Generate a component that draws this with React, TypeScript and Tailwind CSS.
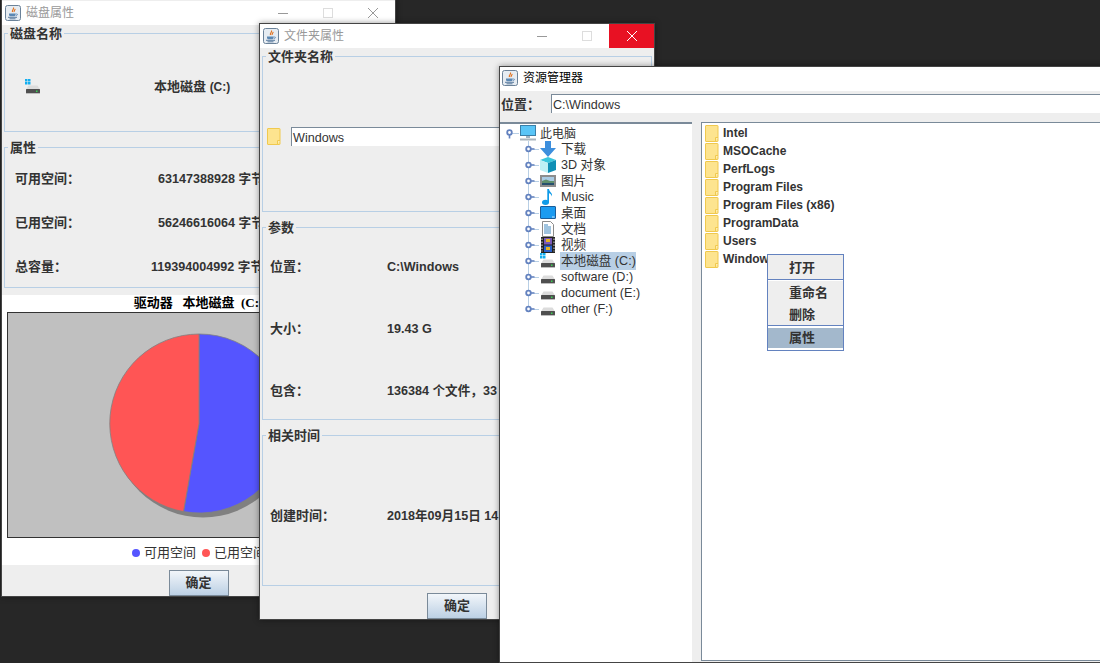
import type { ReactNode } from 'react'

function JavaIcon() {
  return (
    <svg width="16" height="16" viewBox="0 0 16 16" className="shrink-0">
      <rect x="0.5" y="0.5" width="15" height="15" rx="2" fill="#e6ecf2" stroke="#6b8299" />
      <path d="M8.5 2.5c1 1.5-2 2.5-1 4.500M10 4c.5 1-1.500 1.500-.8 3" fill="none" stroke="#e2711d" strokeWidth="1.200" />
      <path d="M4 8.500h6.500v1.200c0 1-1 1.500-2 1.500h-2.500c-1 0-2-.5-2-1.500z" fill="#5b87b2" />
      <path d="M3 12.300h9M4.500 13.800h6" stroke="#4a6d94" strokeWidth="0.900" />
      <path d="M10.500 9h1.500c.8 0 .8 1.500-1.200 1.700" fill="none" stroke="#5b87b2" strokeWidth="0.800" />
    </svg>
  )
}

function FolderIcon() {
  return (
    <svg width="14" height="17" viewBox="0 0 14 17" className="shrink-0">
      <rect x="0.500" y="0.500" width="12.500" height="16" rx="0.500" fill="#fde48f" stroke="#f0c94e" />
      <path d="M10.500 16.500v-4h2.500" fill="#fdeeb5" stroke="#f0c94e" />
    </svg>
  )
}

function DriveIcon({ windows }: { windows?: boolean }) {
  return (
    <svg width="16" height="16" viewBox="0 0 16 16" className="shrink-0">
      {windows && (
        <g fill="#12aef0">
          <rect x="0" y="0" width="2.500" height="2.500" />
          <rect x="3" y="0" width="2.500" height="2.500" />
          <rect x="0" y="3" width="2.500" height="2.500" />
          <rect x="3" y="3" width="2.500" height="2.500" />
        </g>
      )}
      <path d="M3.500 6.500h9l2.500 4h-14z" fill="#dcdcdc" />
      <rect x="1" y="10" width="14" height="4" rx="0.500" fill="#4f4f4f" />
      <rect x="1" y="14" width="14" height="1" fill="#bdbdbd" />
      <rect x="11" y="11.500" width="1.500" height="1.500" fill="#39d353" />
    </svg>
  )
}

function TreeIcon({ name }: { name: string }) {
  if (name === 'pc')
    return (
      <svg width="16" height="16" viewBox="0 0 16 16" className="shrink-0">
        <rect x="0.500" y="0.500" width="15" height="10" fill="#59c5f7" stroke="#3b7fa8" />
        <rect x="6" y="11" width="4" height="2" fill="#9fb4c2" />
        <rect x="0" y="13.500" width="16" height="2" fill="#aab5bd" />
      </svg>
    )
  if (name === 'down')
    return (
      <svg width="16" height="16" viewBox="0 0 16 16" className="shrink-0">
        <path d="M5 0h6v7h5l-8 9-8-9h5z" fill="#3d8fdd" />
      </svg>
    )
  if (name === 'cube')
    return (
      <svg width="16" height="16" viewBox="0 0 16 16" className="shrink-0">
        <path d="M8 0l8 3-8 3-8-3z" fill="#39c6dc" />
        <path d="M0 3l8 3v10l-8-3z" fill="#bdf0f5" />
        <path d="M16 3l-8 3v10l8-3z" fill="#0f8fb5" />
      </svg>
    )
  if (name === 'pic')
    return (
      <svg width="16" height="16" viewBox="0 0 16 16" className="shrink-0">
        <rect x="1" y="3" width="14" height="10" fill="#fff" stroke="#8d8d8d" strokeWidth="2" />
        <rect x="2" y="4" width="12" height="4" fill="#a9cbe4" />
        <path d="M2 8l4-1.500 4 1.500h4v2h-12z" fill="#5f8f6d" />
        <rect x="2" y="10" width="12" height="2" fill="#26506e" />
      </svg>
    )
  if (name === 'music')
    return (
      <svg width="16" height="16" viewBox="0 0 16 16" className="shrink-0">
        <ellipse cx="5.500" cy="13.300" rx="3.500" ry="2.600" fill="#0f9be8" />
        <path d="M7.300 0h1.700c.3 3 3.700 3.500 3 7.500-.5-2-2-3-3-3.200v9h-1.700z" fill="#0f9be8" />
      </svg>
    )
  if (name === 'desk')
    return (
      <svg width="16" height="16" viewBox="0 0 16 16" className="shrink-0">
        <rect x="0.500" y="1.500" width="15" height="12" rx="0.500" fill="#1b9bf0" stroke="#1c5d99" />
        <rect x="12" y="11.500" width="2.500" height="1" fill="#cfe8fb" />
      </svg>
    )
  if (name === 'doc')
    return (
      <svg width="16" height="16" viewBox="0 0 16 16" className="shrink-0">
        <path d="M2.500.5h8l3 3v12h-11z" fill="#fff" stroke="#8b8b8b" />
        <path d="M4 4h4M4 6h7M4 8h7M4 10h7M4 12h7" stroke="#2b7cb8" strokeWidth="0.900" />
      </svg>
    )
  return (
    <svg width="16" height="16" viewBox="0 0 16 16" className="shrink-0">
      <rect x="1" y="0" width="14" height="16" fill="#222" />
      <rect x="4" y="1" width="8" height="6.500" fill="#7a5bb8" />
      <rect x="4" y="8.500" width="8" height="6.500" fill="#2c62c9" />
      <path d="M6 2h4v3h-4zM6 10h4v3h-4z" fill="#e6b422" />
      <path d="M2 1.500v13M14 1.500v13" stroke="#ddd" strokeWidth="1" strokeDasharray="1.500 1.500" />
    </svg>
  )
}

function TreeHandle({ last, root }: { last?: boolean; root?: boolean }) {
  if (root) {
    return (
      <svg width="20" height="16" viewBox="0 0 20 16" className="shrink-0">
        <path d="M9 8.500h10" stroke="#b8cfe5" />
        <circle cx="9.500" cy="7.500" r="2.300" fill="#fff" stroke="#6382bf" strokeWidth="1.800" />
        <path d="M9.500 9.500v4" stroke="#6382bf" strokeWidth="1.600" />
      </svg>
    )
  }
  return (
    <svg width="20" height="16" viewBox="0 0 20 16" className="shrink-0">
      <path d={last ? 'M8.500 0v8' : 'M8.500 0v16'} stroke="#b8cfe5" />
      <path d="M14 8.500h5" stroke="#b8cfe5" />
      <circle cx="8.500" cy="8" r="2.300" fill="#fff" stroke="#6382bf" strokeWidth="1.800" />
      <path d="M10.500 8h4" stroke="#6382bf" strokeWidth="1.600" />
    </svg>
  )
}

function TitleBar({ title, active, controls, close, className }: { title: string; active?: boolean; controls?: boolean; close?: boolean; className?: string }) {
  return (
    <div className={`flex h-6 items-center bg-white ${className ?? 'pl-[3px]'}`}>
      <JavaIcon />
      <span className={`ml-[5px] text-xs ${active ? 'text-black' : 'text-[#999999]'}`}>{title}</span>
      {controls && (
        <div className="ml-auto flex h-full">
          <div className="flex w-[45px] items-center justify-center">
            <div className="h-px w-[10px] bg-[#999999]" />
          </div>
          <div className="flex w-[45px] items-center justify-center">
            <div className="size-[10px] border border-[#dddddd]" />
          </div>
          <div className={`flex w-[45px] items-center justify-center ${close ? 'bg-[#e81123]' : ''}`}>
            <svg width="10" height="10" viewBox="0 0 10 10">
              <path d="M0 0l10 10M10 0l-10 10" stroke={close ? '#ffffff' : '#999999'} strokeWidth="1" />
            </svg>
          </div>
        </div>
      )}
    </div>
  )
}

function Group({ title, className, children }: { title: string; className: string; children: ReactNode }) {
  return (
    <fieldset className={`mx-[2px] border border-[#b8cfe5] ${className}`}>
      <legend className="ml-[3px] px-[2px] text-[13px] leading-4 font-bold">
        <span className="relative top-px">{title}</span>
      </legend>
      {children}
    </fieldset>
  )
}

function OkButton() {
  return (
    <button className="h-[26px] w-[60px] border border-[#7a8a99] bg-gradient-to-b from-[#f2f6fa] to-[#bcd0e4] text-[13px] font-bold text-[#333333]">
      确定
    </button>
  )
}

function InfoRow({ label, value, className }: { label: string; value: string; className: string }) {
  return (
    <div className={`flex items-center text-[12.600px] font-bold ${className}`}>
      <span className="shrink-0 text-[13px]">{label}</span>
      <span className="whitespace-nowrap">{value}</span>
    </div>
  )
}

const treeItems = [
  { icon: 'down', label: '下载' },
  { icon: 'cube', label: '3D 对象' },
  { icon: 'pic', label: '图片' },
  { icon: 'music', label: 'Music' },
  { icon: 'desk', label: '桌面' },
  { icon: 'doc', label: '文档' },
  { icon: 'film', label: '视频' },
]

const drives = [
  { label: '本地磁盘 (C:)', windows: true },
  { label: 'software (D:)' },
  { label: 'document (E:)' },
  { label: 'other (F:)' },
]

const folders = ['Intel', 'MSOCache', 'PerfLogs', 'Program Files', 'Program Files (x86)', 'ProgramData', 'Users', 'Windows']

function DiskWindow() {
  return (
    <div className="absolute top-[-1px] left-[1px] flex h-[598px] w-[395px] flex-col border border-[#444444] bg-[#eeeeee] pt-px shadow-[0_0_6px_rgba(0,0,0,0.4)]">
      <TitleBar title="磁盘属性" controls />
      <Group title="磁盘名称" className="h-[107px]">
        <div className="flex h-[83px] items-center pt-[9px] pl-[20px]">
          <DriveIcon windows />
          <span className="ml-[113px] text-[13px] font-bold">
            本地磁盘 <span className="text-xs">(C:)</span>
          </span>
        </div>
      </Group>
      <Group title="属性" className="mt-[7px] h-[149px]">
        <div className="flex flex-col pt-[2px]">
          <InfoRow label="可用空间：" value="63147388928 字节" className="h-[44px] pl-[10px] [&>span:first-child]:w-[143px]" />
          <InfoRow label="已用空间：" value="56246616064 字节" className="h-[44px] pl-[10px] [&>span:first-child]:w-[143px]" />
          <InfoRow label="总容量：" value="119394004992 字节" className="h-[44px] pl-[10px] [&>span:first-child]:w-[136px]" />
        </div>
      </Group>
      <div className="mt-[7px] flex h-[270px] flex-col bg-white">
        <div className="h-[17px] text-center font-['Liberation_Serif','Noto_Sans_CJK_SC',serif] text-[13px] leading-4 font-bold text-black">
          驱动器&nbsp;&nbsp;&nbsp;本地磁盘&nbsp;&nbsp;(C:)
        </div>
        <div className="mx-[5px] h-[226px] border border-[#333333] bg-[#c0c0c0]">
          <svg width="382" height="224" viewBox="0 0 382 224">
            <circle cx="195" cy="114.500" r="90" fill="#808080" />
            <path d="M191 110.500V21a89.500 89.500 0 1 1-15.500 177.600z" fill="#5555ff" stroke="#808080" strokeWidth="0.800" />
            <path d="M191 110.500V21a89.500 89.500 0 0 0-15.500 177.600z" fill="#ff5555" stroke="#808080" strokeWidth="0.800" />
          </svg>
        </div>
        <div className="flex flex-1 items-center justify-center gap-[4px] pt-[3px] pl-px text-[13px] text-[#333333]">
          <span className="size-2 rounded-full bg-[#5555ff]" />
          <span>可用空间</span>
          <span className="ml-[2px] size-2 rounded-full bg-[#ff5555]" />
          <span>已用空间</span>
        </div>
      </div>
      <div className="flex flex-1 justify-center pt-[5px]">
        <OkButton />
      </div>
    </div>
  )
}

function FolderWindow() {
  return (
    <div className="absolute top-[23px] left-[259px] flex h-[597px] w-[396px] flex-col border border-[#444444] bg-[#eeeeee] shadow-[0_0_6px_rgba(0,0,0,0.4)]">
      <TitleBar title="文件夹属性" controls close />
      <Group title="文件夹名称" className="h-[164px]">
        <div className="flex h-[144px] items-center pl-[4px]">
          <FolderIcon />
          <div className="ml-[10px] h-[19px] flex-1 border-t border-l border-[#7a8a99] bg-white pl-px text-[12.600px] leading-[20px]">Windows</div>
        </div>
      </Group>
      <Group title="参数" className="mt-[7px] h-[201px]">
        <div className="pt-px">
          <InfoRow label="位置：" value="C:\Windows" className="h-[62px] pl-[7px] [&>span:first-child]:w-[117px]" />
          <InfoRow label="大小：" value="19.43 G" className="h-[62px] pl-[7px] [&>span:first-child]:w-[117px]" />
          <InfoRow label="包含：" value="136384 个文件，33" className="h-[62px] pl-[7px] [&>span:first-child]:w-[117px]" />
        </div>
      </Group>
      <Group title="相关时间" className="mt-[7px] h-[159px]">
        <InfoRow label="创建时间：" value="2018年09月15日 14" className="h-[142px] pt-[4px] pl-[7px] [&>span:first-child]:w-[117px]" />
      </Group>
      <div className="flex flex-1 justify-center pt-[7px]">
        <OkButton />
      </div>
    </div>
  )
}

function TreePanel() {
  return (
    <div className="h-full w-[192px] shrink-0 border-t-2 border-[#7a8a99] bg-white pt-[1px] text-[12.600px] text-[#333333]">
      <div className="flex h-4 items-center">
        <TreeHandle root />
        <TreeIcon name="pc" />
        <span className="relative top-px ml-[4px] text-xs">此电脑</span>
      </div>
      {treeItems.map((item) => (
        <div key={item.label} className="flex h-4 items-center pl-[20px]">
          <TreeHandle />
          <TreeIcon name={item.icon} />
          <span className="ml-[5px]">{item.label}</span>
        </div>
      ))}
      {drives.map((d, i) => (
        <div key={d.label} className="flex h-4 items-center pl-[20px]">
          <TreeHandle last={i === drives.length - 1} />
          <DriveIcon windows={d.windows} />
          <span className={`ml-[4px] pl-px ${d.windows ? 'bg-[#b8cfe5]' : ''}`}>{d.label}</span>
        </div>
      ))}
    </div>
  )
}

function FileList() {
  return (
    <div className="relative ml-[9px] h-[539px] flex-1 border border-[#7a8a99] bg-white pt-px">
      {folders.map((name) => (
        <div key={name} className="flex h-[18px] items-center pl-[3px] text-xs font-bold whitespace-nowrap text-[#333333]">
          <FolderIcon />
          <span className="ml-[4px]">{name}</span>
        </div>
      ))}
      <div className="absolute top-[131px] left-[65px] w-[77px] border border-[#6382bf] bg-[#eeeeee] text-[13px] font-bold text-[#333333]">
        <div className="flex h-[24px] items-center pt-[2px] pl-[21px]">打开</div>
        <div className="h-[2px] border-t border-[#6382bf] bg-white" />
        <div className="flex h-[23px] items-center pt-px pl-[21px]">重命名</div>
        <div className="flex h-[21px] items-center pl-[21px]">删除</div>
        <div className="h-[3px] border-t border-[#6382bf] bg-white" />
        <div className="flex h-[20px] items-center bg-[#a3b8cc] pl-[21px]">属性</div>
        <div className="h-[2px] bg-white" />
      </div>
    </div>
  )
}

function ExplorerWindow() {
  return (
    <div className="absolute top-[66px] left-[499px] flex h-[597px] w-[620px] flex-col border border-[#444444] bg-[#eeeeee] shadow-[0_0_6px_rgba(0,0,0,0.4)]">
      <TitleBar title="资源管理器" active className="pb-[2px] pl-[2px]" />
      <div className="flex h-[31px] items-start pt-[3px] pl-px">
        <span className="w-[50px] shrink-0 text-[13px] leading-[21px] font-bold text-[#333333]">位置：</span>
        <div className="h-[19px] flex-1 border-t border-l border-[#7a8a99] bg-white pl-px text-[12.600px] leading-[20px] text-[#333333]">C:\Windows</div>
      </div>
      <div className="flex min-h-0 flex-1">
        <TreePanel />
        <FileList />
      </div>
    </div>
  )
}

export default function App() {
  return (
    <div className="relative h-[663px] w-[1100px] overflow-hidden bg-[#272727] font-['Liberation_Sans','Noto_Sans_CJK_SC',sans-serif] text-[#333333]">
      <DiskWindow />
      <FolderWindow />
      <ExplorerWindow />
    </div>
  )
}
